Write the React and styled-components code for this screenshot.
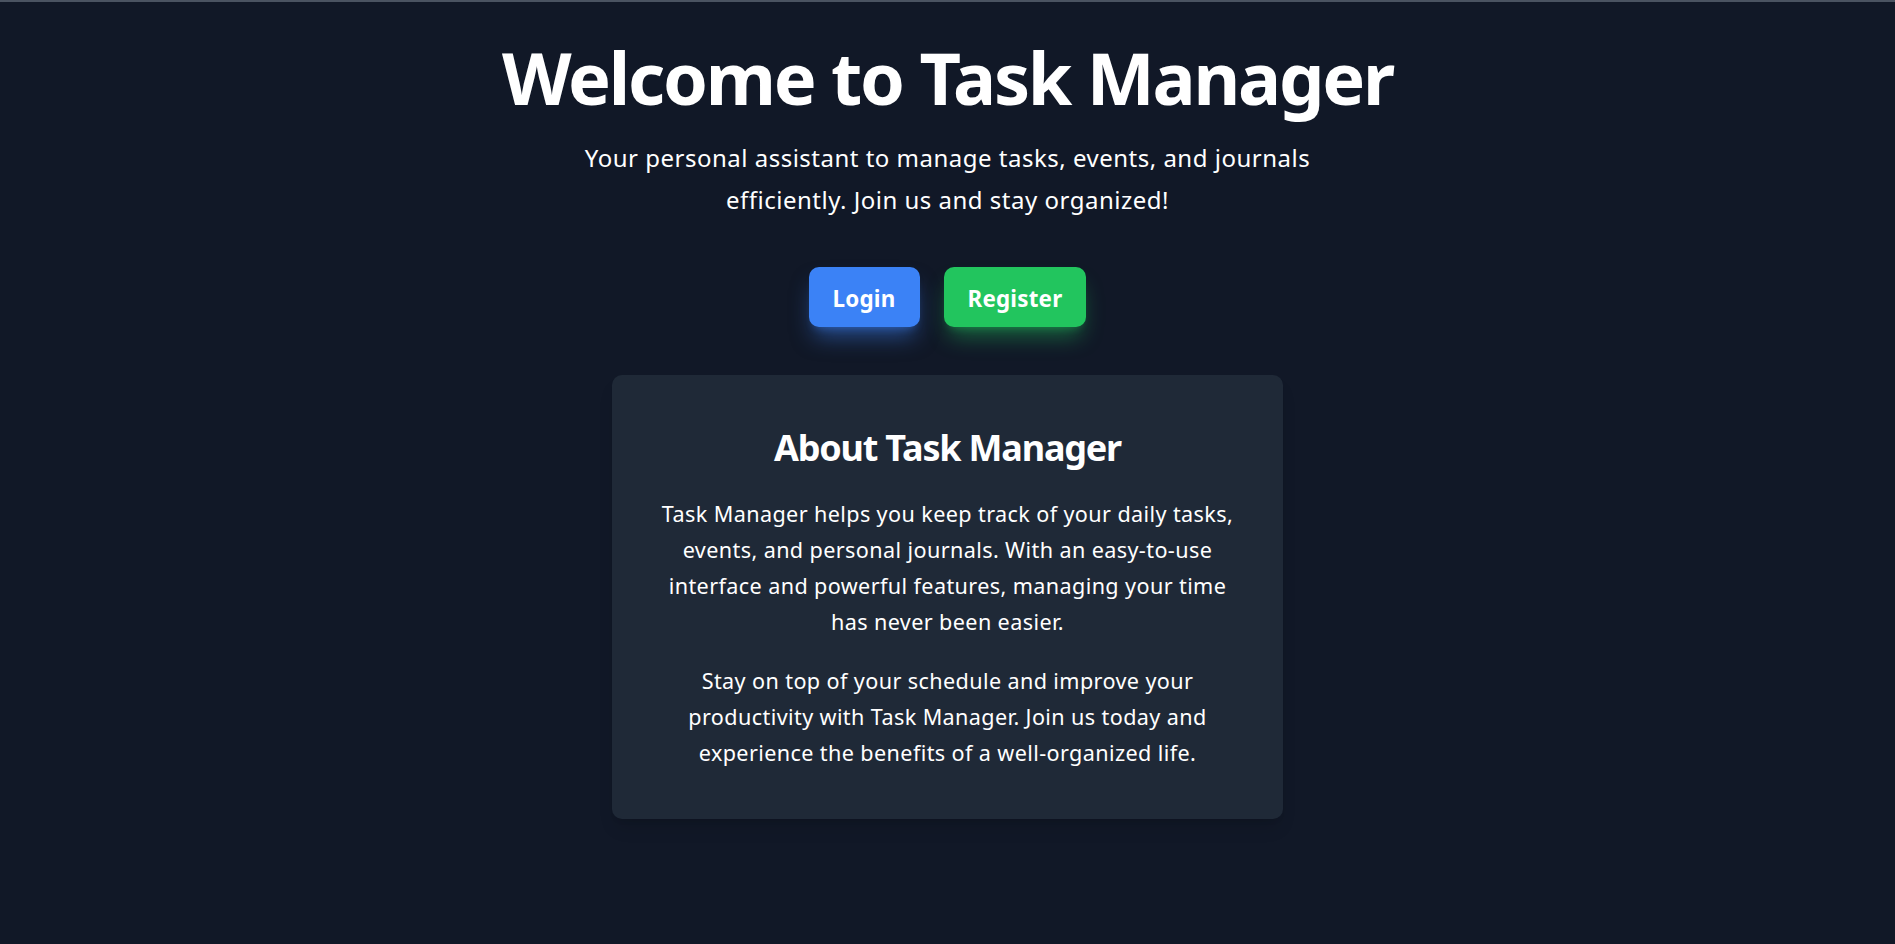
import React from "react";
import styled, { createGlobalStyle } from "styled-components";

const GlobalStyle = createGlobalStyle`
  html, body { margin: 0; padding: 0; }
  body {
    background: #111827;
    color: #ffffff;
    font-family: "Noto Sans", "Open Sans", sans-serif;
    -webkit-font-smoothing: antialiased;
  }
  * { box-sizing: border-box; }
`;

const Page = styled.main`
  min-height: 944px;
  border-top: 2px solid #4a5361;
  padding: 39px 24px 48px;
  display: flex;
  flex-direction: column;
  align-items: center;
  text-align: center;
`;

const Title = styled.h1`
  margin: 0;
  font-size: 72px;
  line-height: 72px;
  font-weight: 700;
  letter-spacing: -2.2px;
  color: #ffffff;
`;

const Subtitle = styled.p`
  margin: 24px 0 0;
  max-width: 768px;
  font-size: 24px;
  line-height: 42px;
  font-weight: 400;
  letter-spacing: 0.5px;
  color: #ffffff;
`;

const Actions = styled.div`
  margin-top: 46px;
  display: flex;
  gap: 24px;
  justify-content: center;
`;

const Button = styled.button`
  height: 60px;
  padding: 3px 24px 0;
  border: none;
  border-radius: 10px;
  font-family: inherit;
  font-size: 22.4px;
  font-weight: 700;
  line-height: 28px;
  letter-spacing: 0.2px;
  color: #ffffff;
  cursor: pointer;
  background: ${(p) => p.$color};
  box-shadow: 0 14px 22px -5px ${(p) => p.$glow}, 0 6px 9px -6px ${(p) => p.$glow};
`;

const Card = styled.section`
  margin-top: 48px;
  width: 671px;
  padding: 48px 44px 48px;
  background: #1f2937;
  border-radius: 10px;
  box-shadow: 0 12px 18px -4px rgba(0, 0, 0, 0.12), 0 5px 7px -5px rgba(0, 0, 0, 0.12);
`;

const CardTitle = styled.h2`
  margin: 0;
  font-size: 36px;
  line-height: 50px;
  font-weight: 700;
  letter-spacing: -1.2px;
  color: #ffffff;
`;

const CardText = styled.p`
  margin: 23px 0 0;
  font-size: 21.6px;
  line-height: 36px;
  letter-spacing: 0.39px;
  color: #ffffff;
`;

export default function App() {
  return (
    <>
      <GlobalStyle />
      <Page>
        <Title>Welcome to Task Manager</Title>
        <Subtitle>
          Your personal assistant to manage tasks, events, and journals efficiently. Join us and stay organized!
        </Subtitle>
        <Actions>
          <Button $color="#3b82f6" $glow="rgba(59, 130, 246, 0.5)">Login</Button>
          <Button $color="#22c55e" $glow="rgba(34, 197, 94, 0.45)">Register</Button>
        </Actions>
        <Card>
          <CardTitle>About Task Manager</CardTitle>
          <CardText>
            Task Manager helps you keep track of your daily tasks, events, and personal journals. With an easy-to-use
            interface and powerful features, managing your time has never been easier.
          </CardText>
          <CardText>
            Stay on top of your schedule and improve your productivity with Task Manager. Join us today and experience
            the benefits of a well-organized life.
          </CardText>
        </Card>
      </Page>
    </>
  );
}
